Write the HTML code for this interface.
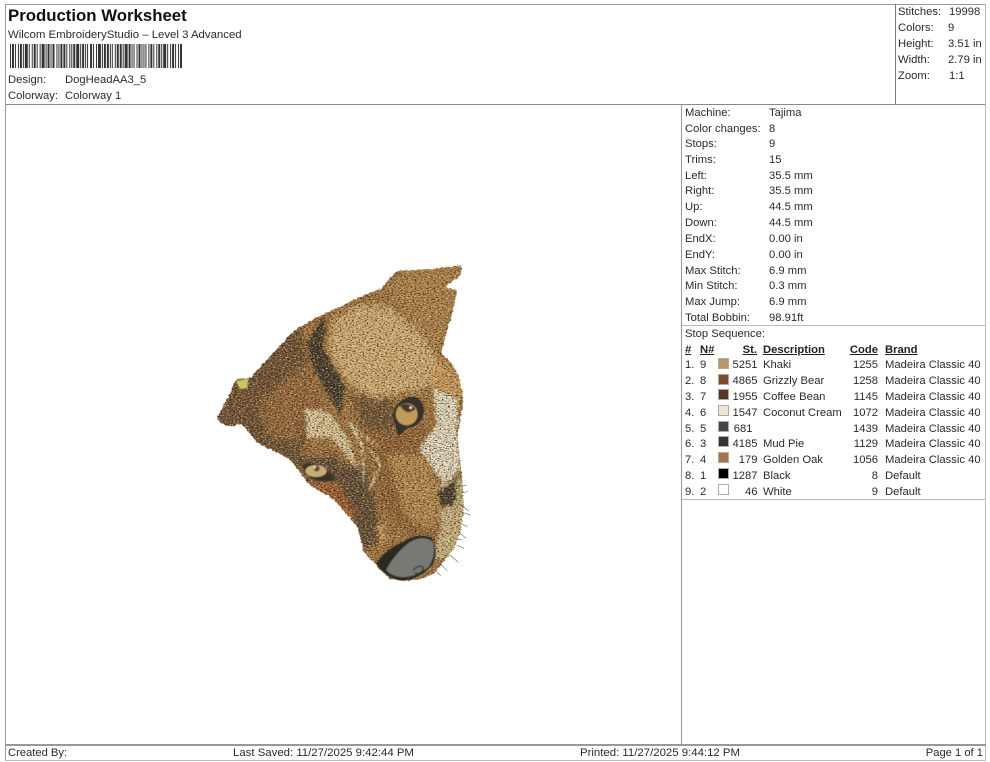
<!DOCTYPE html>
<html><head><meta charset="utf-8"><style>
html,body{margin:0;padding:0;background:#fff}
#p{position:relative;width:990px;height:762px;overflow:hidden;background:#fff;font-family:"Liberation Sans",Arial,sans-serif;font-size:11.25px;line-height:16px;color:#2a2a2a}
#p div{position:absolute;white-space:nowrap}
.l{background:#999}
.r{text-align:right}
.u{font-weight:bold;text-decoration:underline;color:#222}
.s{width:9px;height:9px;left:718px;border:1px solid #aaa}
</style></head><body><div id="p">
<div class="l" style="left:5px;top:4px;width:981px;height:1px"></div>
<div class="l" style="left:5px;top:104px;width:981px;height:1px;background:#888"></div>
<div class="l" style="left:5px;top:4px;width:1px;height:757px"></div>
<div class="l" style="left:985px;top:4px;width:1px;height:757px;background:#bbb"></div>
<div class="l" style="left:895px;top:4px;width:1px;height:100px;background:#777"></div>
<div class="l" style="left:681px;top:104px;width:1px;height:640px;background:#999"></div>
<div class="l" style="left:682px;top:325px;width:304px;height:1px;background:#bbb"></div>
<div class="l" style="left:682px;top:499px;width:304px;height:1px;background:#bbb"></div>
<div class="l" style="left:5px;top:744px;width:981px;height:2px;background:#999"></div>
<div class="l" style="left:5px;top:760px;width:981px;height:1px;background:#bbb"></div>

<div style="left:8px;top:6px;font-size:16.8px;font-weight:bold;line-height:20px;color:#111">Production Worksheet</div>
<div style="left:8px;top:27px;font-size:11.4px">Wilcom EmbroideryStudio – Level 3 Advanced</div>
<svg style="position:absolute;left:10px;top:44px" width="172" height="24" viewBox="0 0 174 24" preserveAspectRatio="none"><line x1="0" y1="12" x2="174" y2="12" stroke="#333" stroke-width="24" stroke-dasharray="1 1 2 1 1 2 1 1 2 1 1 1 3 1 1 2 1 1 2 1 1 2 1 1 3 1 1 1 2 1 1 1 2 2 1 1 1 1 2 1 2 1 1 2 1 1 1 1 2 1 3 1 1 1 2 1 1 1 1 2 2 1 1 2 1 1 3 1 1 1 2 1 2 1 1 1 1 2 1 1 2 1 2 1 1 1 3 1 2 1 1 1 1 2 1 1 2 1 1 1 1 1 1 2"/></svg>
<div style="left:8px;top:72px">Design:</div><div style="left:65px;top:72px">DogHeadAA3_5</div>
<div style="left:8px;top:88px">Colorway:</div><div style="left:65px;top:88px">Colorway 1</div>

<div style="left:898px;top:4px">Stitches:</div><div style="left:949px;top:4px">19998</div>
<div style="left:898px;top:20px">Colors:</div><div style="left:948px;top:20px">9</div>
<div style="left:898px;top:36px">Height:</div><div style="left:948px;top:36px">3.51 in</div>
<div style="left:898px;top:52px">Width:</div><div style="left:948px;top:52px">2.79 in</div>
<div style="left:898px;top:68px">Zoom:</div><div style="left:949px;top:68px">1:1</div>

<div style="left:685px;top:105px">Machine:</div><div style="left:769px;top:105px">Tajima</div>
<div style="left:685px;top:121px">Color changes:</div><div style="left:769px;top:121px">8</div>
<div style="left:685px;top:136px">Stops:</div><div style="left:769px;top:136px">9</div>
<div style="left:685px;top:152px">Trims:</div><div style="left:769px;top:152px">15</div>
<div style="left:685px;top:168px">Left:</div><div style="left:769px;top:168px">35.5 mm</div>
<div style="left:685px;top:183px">Right:</div><div style="left:769px;top:183px">35.5 mm</div>
<div style="left:685px;top:199px">Up:</div><div style="left:769px;top:199px">44.5 mm</div>
<div style="left:685px;top:215px">Down:</div><div style="left:769px;top:215px">44.5 mm</div>
<div style="left:685px;top:231px">EndX:</div><div style="left:769px;top:231px">0.00 in</div>
<div style="left:685px;top:247px">EndY:</div><div style="left:769px;top:247px">0.00 in</div>
<div style="left:685px;top:263px">Max Stitch:</div><div style="left:769px;top:263px">6.9 mm</div>
<div style="left:685px;top:278px">Min Stitch:</div><div style="left:769px;top:278px">0.3 mm</div>
<div style="left:685px;top:294px">Max Jump:</div><div style="left:769px;top:294px">6.9 mm</div>
<div style="left:685px;top:310px">Total Bobbin:</div><div style="left:769px;top:310px">98.91ft</div>
<div style="left:685px;top:326px">Stop Sequence:</div>

<div class="u" style="left:685px;top:342px">#</div><div class="u" style="left:700px;top:342px">N#</div><div class="u r" style="left:720px;width:37px;top:342px">St.</div><div class="u" style="left:763px;top:342px">Description</div><div class="u r" style="left:840px;width:38px;top:342px">Code</div><div class="u" style="left:885px;top:342px">Brand</div>

<div style="left:685px;top:357px">1.</div><div style="left:700px;top:357px">9</div><div class="s" style="top:358px;background:#b89668"></div><div class="r" style="left:720px;width:37.5px;top:357px">5251</div><div style="left:763px;top:357px">Khaki</div><div class="r" style="left:840px;width:38px;top:357px">1255</div><div style="left:885px;top:357px">Madeira Classic 40</div>
<div style="left:685px;top:373px">2.</div><div style="left:700px;top:373px">8</div><div class="s" style="top:374px;background:#7d4a2c"></div><div class="r" style="left:720px;width:37.5px;top:373px">4865</div><div style="left:763px;top:373px">Grizzly Bear</div><div class="r" style="left:840px;width:38px;top:373px">1258</div><div style="left:885px;top:373px">Madeira Classic 40</div>
<div style="left:685px;top:389px">3.</div><div style="left:700px;top:389px">7</div><div class="s" style="top:389px;background:#553526"></div><div class="r" style="left:720px;width:37.5px;top:389px">1955</div><div style="left:763px;top:389px">Coffee Bean</div><div class="r" style="left:840px;width:38px;top:389px">1145</div><div style="left:885px;top:389px">Madeira Classic 40</div>
<div style="left:685px;top:405px">4.</div><div style="left:700px;top:405px">6</div><div class="s" style="top:405px;background:#efe4cf"></div><div class="r" style="left:720px;width:37.5px;top:405px">1547</div><div style="left:763px;top:405px">Coconut Cream</div><div class="r" style="left:840px;width:38px;top:405px">1072</div><div style="left:885px;top:405px">Madeira Classic 40</div>
<div style="left:685px;top:421px">5.</div><div style="left:700px;top:421px">5</div><div class="s" style="top:421px;background:#464646"></div><div class="r" style="left:720px;width:32.5px;top:421px">681</div><div class="r" style="left:840px;width:38px;top:421px">1439</div><div style="left:885px;top:421px">Madeira Classic 40</div>
<div style="left:685px;top:436px">6.</div><div style="left:700px;top:436px">3</div><div class="s" style="top:436px;background:#33352e"></div><div class="r" style="left:720px;width:37.5px;top:436px">4185</div><div style="left:763px;top:436px">Mud Pie</div><div class="r" style="left:840px;width:38px;top:436px">1129</div><div style="left:885px;top:436px">Madeira Classic 40</div>
<div style="left:685px;top:452px">7.</div><div style="left:700px;top:452px">4</div><div class="s" style="top:452px;background:#a87548"></div><div class="r" style="left:720px;width:37.5px;top:452px">179</div><div style="left:763px;top:452px">Golden Oak</div><div class="r" style="left:840px;width:38px;top:452px">1056</div><div style="left:885px;top:452px">Madeira Classic 40</div>
<div style="left:685px;top:468px">8.</div><div style="left:700px;top:468px">1</div><div class="s" style="top:468px;background:#000"></div><div class="r" style="left:720px;width:37.5px;top:468px">1287</div><div style="left:763px;top:468px">Black</div><div class="r" style="left:840px;width:38px;top:468px">8</div><div style="left:885px;top:468px">Default</div>
<div style="left:685px;top:484px">9.</div><div style="left:700px;top:484px">2</div><div class="s" style="top:484px;background:#fff"></div><div class="r" style="left:720px;width:37.5px;top:484px">46</div><div style="left:763px;top:484px">White</div><div class="r" style="left:840px;width:38px;top:484px">9</div><div style="left:885px;top:484px">Default</div>

<div style="left:8px;top:745px;font-size:11.2px">Created By:</div>
<div style="left:233px;top:745px;font-size:11.4px">Last Saved: 11/27/2025 9:42:44 PM</div>
<div style="left:580px;top:745px;font-size:11.4px">Printed: 11/27/2025 9:44:12 PM</div>
<div class="r" style="left:900px;width:83px;top:745px;font-size:11.2px">Page 1 of 1</div>

<svg style="position:absolute;left:200px;top:255px" width="280" height="340" viewBox="0 0 840 1020">
<defs>
<filter id="b" filterUnits="userSpaceOnUse" x="0" y="0" width="840" height="1020"><feGaussianBlur stdDeviation="8" result="g"/><feTurbulence type="fractalNoise" baseFrequency="0.06 0.14" numOctaves="3" seed="11" result="n"/><feDisplacementMap in="g" in2="n" scale="50" xChannelSelector="R" yChannelSelector="G"/></filter>
<filter id="b2" filterUnits="userSpaceOnUse" x="0" y="0" width="840" height="1020"><feTurbulence type="fractalNoise" baseFrequency="0.1 0.22" numOctaves="2" seed="3" result="n"/><feDisplacementMap in="SourceGraphic" in2="n" scale="32" xChannelSelector="R" yChannelSelector="G"/><feGaussianBlur stdDeviation="1.5"/></filter>
<filter id="b3" x="-20%" y="-20%" width="140%" height="140%"><feGaussianBlur stdDeviation="1.5"/></filter>
<filter id="t" x="0" y="0" width="100%" height="100%"><feTurbulence type="fractalNoise" baseFrequency="0.16 0.34" numOctaves="2" seed="4"/><feColorMatrix values="0 0 0 0 0.03  0 0 0 0 0.015  0 0 0 0 0.005  3 0 0 0 -1.42"/></filter>
<filter id="t2" x="0" y="0" width="100%" height="100%"><feTurbulence type="fractalNoise" baseFrequency="0.18 0.3" numOctaves="2" seed="9"/><feColorMatrix values="0 0 0 0 0.85  0 0 0 0 0.62  0 0 0 0 0.3  0 3 0 0 -1.45"/></filter>
<filter id="sm" x="-5%" y="-5%" width="110%" height="110%" color-interpolation-filters="sRGB"><feGaussianBlur stdDeviation="6" result="g"/><feComponentTransfer in="g" result="h"><feFuncA type="linear" slope="7" intercept="-3"/></feComponentTransfer><feTurbulence type="fractalNoise" baseFrequency="0.12" numOctaves="2" seed="7" result="n"/><feDisplacementMap in="h" in2="n" scale="10" xChannelSelector="R" yChannelSelector="G"/></filter>
<mask id="m" maskUnits="userSpaceOnUse" x="0" y="0" width="840" height="1020"><path filter="url(#sm)" fill="#fff" d="M790 30L778 66L728 98L772 104L758 170L722 295L752 320L778 365L790 430L782 490L772 540L778 600L786 660L792 760L782 830L760 885L722 930L700 958L660 972L620 978L570 972L530 932L492 892L472 815L400 732L330 692L268 612L170 562L125 505L85 516L48 492L88 420L108 372L152 368L215 298L285 224L345 190L400 164L480 126L545 100L565 75L592 46L680 44Z"/></mask>
</defs>
<g mask="url(#m)">
<rect width="840" height="1020" fill="#a0733f"/>
<g filter="url(#b)">
<path fill="#694d33" d="M20 500L110 350L215 270L300 210L330 330L330 460L310 600L270 640L170 590Z"/>
<path fill="#94663a" d="M180 440L320 320L380 440L320 480L290 560L200 540Z"/>
<path fill="#d6b27a" d="M400 190L480 150L560 150L640 210L700 290L720 340L680 400L600 415L520 430L450 390L385 300Z"/>
<path fill="#b0834c" d="M560 100L620 40L790 30L770 110L760 180L715 290L650 200L590 140Z"/>
<path fill="#cf9d60" d="M720 310L785 360L800 430L720 420L690 390Z"/>
<path fill="#8f6135" d="M480 500L680 510L690 600L740 690L730 840L640 850L540 750L520 640Z"/>
<path fill="#b88a50" d="M560 600L680 600L730 740L700 830L620 790Z"/>
<path fill="#5a4634" d="M410 620L500 640L530 760L540 850L480 890L450 760L420 700Z"/>
<path fill="#a05a2c" d="M320 680L410 690L480 790L450 780L380 730Z"/>
<path fill="#5a4630" d="M280 610L410 600L420 680L320 680Z"/>
<path fill="#6b5034" d="M450 420L590 440L580 530L490 520Z"/>
</g>
<g filter="url(#b2)">
<path fill="#3a352a" d="M320 262L375 180L370 280L435 395L420 480L375 400L335 330Z"/>
<path fill="#dfcda2" d="M315 460L385 470L445 555L482 655L425 585L390 545L320 550Z"/>
<path fill="#e9e5d0" d="M700 400L775 430L770 540L782 640L735 690L690 630L658 580L710 510Z"/>
<path fill="#cdb88a" d="M720 680L800 670L800 800L760 900L700 915L720 820Z"/>
<path fill="#3a362c" d="M715 710L770 670L765 750L725 760Z"/>
<path fill="none" stroke="#ece2c2" stroke-width="6" d="M440 500Q480 540 540 575M460 525Q500 580 490 680M510 580L540 630L510 700"/>
<path fill="#c69a5c" d="M530 810L550 805L560 860L540 860Z"/>
</g>
<rect width="840" height="1020" filter="url(#t2)"/>
<rect width="840" height="1020" filter="url(#t)"/>
</g>
<g filter="url(#b3)">
<path d="M578 480Q590 430 640 425Q670 430 672 470Q665 515 620 520L595 545Z" fill="#35302a"/>
<ellipse cx="620" cy="478" rx="33" ry="33" fill="#c09c5a"/>
<path d="M600 452a34 34 0 0 1 46 10q-10 10-24 10q-14-6-22-20z" fill="#4a3a26"/>
<circle cx="632" cy="458" r="4" fill="#eee"/>
<path d="M305 632Q345 612 385 650Q400 668 412 672Q360 690 325 662Z" fill="#3a3228"/>
<ellipse cx="348" cy="648" rx="32" ry="18" fill="#c8ad78"/>
<circle cx="350" cy="641" r="9" fill="#6b4c2a"/>
<circle cx="344" cy="637" r="3.5" fill="#eee"/>
<path d="M528 925Q555 885 610 860Q650 832 695 848Q715 890 700 925Q665 970 610 977Q560 975 528 925Z" fill="#2b2a22"/>
<path d="M558 945Q585 895 628 862Q670 838 698 860Q710 900 686 935Q645 970 600 966Q572 962 558 945Z" fill="#777a72"/>
<path d="M640 945q20-20 30-5q-5 20-25 15" fill="none" stroke="#34332c" stroke-width="4"/>
<path fill="#c9c76a" d="M108 378L145 370L142 400L120 402Z"/>
</g>
<path fill="none" stroke="#57523f" stroke-width="1.6" d="M740 700L800 690M755 720L803 710M760 680L770 740M770 740L806 768M780 770L812 780M770 800L803 815M775 830L798 850M770 870L792 880M750 900L775 922M720 925L742 948M705 945L722 962M740 680L772 670M760 850L786 855"/>
</svg>
</div></body></html>
